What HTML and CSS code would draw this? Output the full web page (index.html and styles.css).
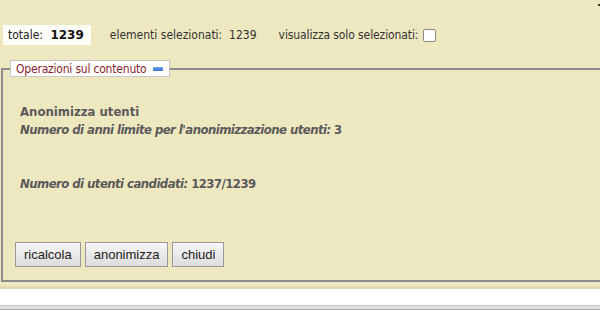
FILE: index.html
```html
<!DOCTYPE html>
<html lang="it">
<head>
<meta charset="utf-8">
<title>Operazioni sul contenuto</title>
<link rel="stylesheet" href="styles.css">
</head>
<body>
<div class="page">
  <div class="corner"></div>
  <div class="topbar">
    <div class="total-box">totale: <b>1239</b></div>
    <div class="info">elementi selezionati:&nbsp; 1239</div>
    <label class="info sel">visualizza solo selezionati: <span class="checkbox"></span></label>
  </div>
  <fieldset class="ops">
    <legend class="ops-legend">Operazioni sul contenuto <span class="minus"></span></legend>
    <div class="ops-body">
      <div class="title">Anonimizza utenti</div>
      <div class="line"><em>Numero di anni limite per l'anonimizzazione utenti:</em> 3</div>
      <div class="line spaced"><em>Numero di utenti candidati:</em> 1237/1239</div>
    </div>
    <div class="buttons">
      <button class="btn">ricalcola</button>
      <button class="btn">anonimizza</button>
      <button class="btn">chiudi</button>
    </div>
  </fieldset>
  <div class="strip"></div>
</div>
<div class="footer"></div>
</body>
</html>
```

FILE: styles.css
```css
html, body {
  margin: 0;
  padding: 0;
  background: #ffffff;
}
.page {
  background: #eee8c0;
  font-family: "DejaVu Sans Condensed", "DejaVu Sans", sans-serif;
  font-size: 12px;
  color: #333333;
  padding-top: 25px;
  position: relative;
}
.corner {
  position: absolute;
  right: 0;
  top: 4px;
  width: 2px;
  height: 2px;
  background: #3a3320;
}
.topbar {
  display: flex;
  align-items: center;
  height: 20px;
  padding-left: 3px;
}
.total-box {
  background: #fdfdf8;
  height: 20px;
  line-height: 20px;
  padding: 0 7px 0 5px;
  box-sizing: border-box;
  white-space: nowrap;
  color: #222;
}
.total-box b {
  font-family: "DejaVu Sans", sans-serif;
  margin-left: 4px;
  color: #111;
}
.info {
  margin-left: 19px;
  color: #333;
  white-space: nowrap;
}
.sel {
  margin-left: 22px;
  display: flex;
  align-items: center;
  letter-spacing: -0.1px;
}
.checkbox {
  display: inline-block;
  width: 11px;
  height: 11px;
  border: 1px solid #8a8a8a;
  border-radius: 2px;
  background: #fff;
  margin-left: 5px;
}
.ops {
  margin: 15px 0 0 1px;
  border: 2px solid #8c8c8c;
  border-right: none;
  padding: 0 0 13px 12px;
}
.ops-legend {
  background: #fff;
  border: 1px solid #c8c8c8;
  padding: 0 6px 0 5px;
  margin-left: -5px;
  color: #8b1c2c;
  font-size: 12px;
  letter-spacing: -0.2px;
  height: 17px;
  line-height: 16px;
  box-sizing: border-box;
  display: flex;
  align-items: center;
}
.minus {
  display: inline-block;
  width: 10px;
  height: 4px;
  margin-left: 7px;
  background: linear-gradient(#6fa3e6, #2e6fcf);
  border-radius: 1px;
}
.ops-body {
  padding: 26px 0 0 5px;
  font-family: "DejaVu Sans Condensed", "DejaVu Sans", sans-serif;
  font-weight: bold;
  color: #5a5a5a;
  font-size: 13px;
}
.title {
  line-height: 18px;
}
.line {
  line-height: 17px;
  letter-spacing: -0.55px;
}
.line em {
  font-style: italic;
}
.spaced {
  margin-top: 37px;
}
.buttons {
  display: flex;
  gap: 4px;
  margin-top: 50px;
}
.btn {
  font-family: "Liberation Sans", Arial, sans-serif;
  font-size: 13px;
  color: #222;
  height: 25px;
  padding: 0 8px;
  border: 1px solid #999;
  background: linear-gradient(#f6f6f6, #dddddd);
  border-radius: 0;
}
.strip {
  height: 7px;
  background: linear-gradient(#eee8c0 0, #eee8c0 4px, #e3dcb2 4px);
}
.footer {
  margin-top: 16px;
  height: 3px;
  border-top: 1px solid #c9c9c9;
  border-bottom: 1px solid #a9a9a9;
  background: #dedede;
}
```
